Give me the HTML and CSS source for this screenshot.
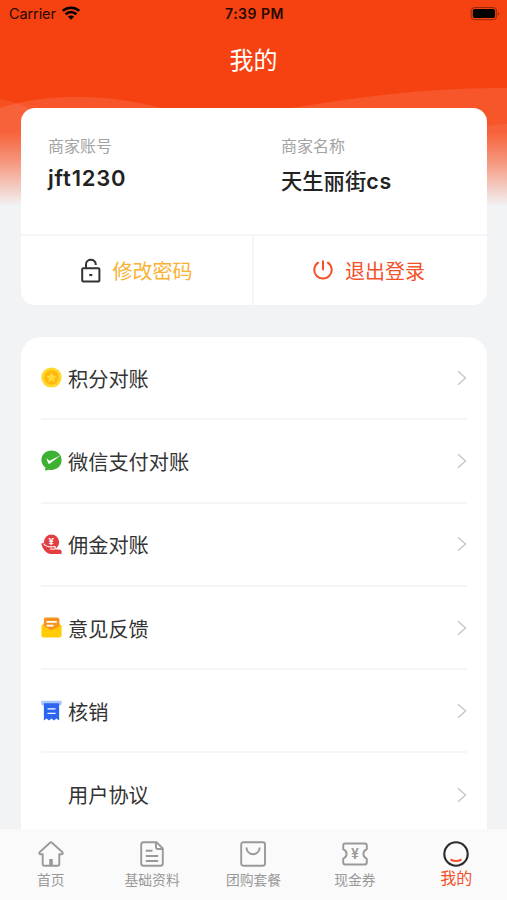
FILE: index.html
```html
<!DOCTYPE html>
<html lang="zh-CN">
<head>
  <meta charset="UTF-8">
  <meta name="viewport" content="width=device-width, initial-scale=1.0">
  <title>我的</title>
  <link rel="stylesheet" href="styles.css">
</head>
<body>
  <!-- Header background -->
  <svg class="hero-bg" viewBox="0 0 507 215" preserveAspectRatio="none">
    <defs>
      <linearGradient id="fade" x1="0" y1="0" x2="0" y2="1">
        <stop offset="0" stop-color="#f2f3f5" stop-opacity="0"/>
        <stop offset="0.4" stop-color="#f2f3f5" stop-opacity="0.36"/>
        <stop offset="1" stop-color="#f2f3f5"/>
      </linearGradient>
    </defs>
    <rect width="507" height="215" fill="#f64110"/>
    <path d="M0 108C50 92 110 94 165 109L165 215H0Z" fill="#fff" fill-opacity="0.11"/>
    <path d="M0 99C10 101 20 103 32 110V215H0Z" fill="#fff" fill-opacity="0.08"/>
    <path d="M290 108C360 97 430 87 507 88V215H290Z" fill="#fff" fill-opacity="0.11"/>
    <path d="M480 128C490 126 500 124 507 124V215H480Z" fill="#fff" fill-opacity="0.08"/>
    <rect y="132" width="507" height="74" fill="url(#fade)"/>
    <rect y="205" width="507" height="10" fill="#f2f3f5"/>
  </svg>

  <div class="page">
    <div class="status-bar">
      <div class="carrier">
        <span>Carrier</span>
        <svg width="18" height="14" viewBox="0 0 18 14">
          <g fill="none" stroke="#000" stroke-width="2.6">
            <path d="M.8 4.9C5.4.6 12.6.6 17.2 4.9"/>
            <path d="M3.6 8.3C6.8 5.4 11.2 5.4 14.4 8.3"/>
          </g>
          <path d="M5.9 10.6C7.7 9 10.3 9 12.1 10.6L9 13.8Z"/>
        </svg>
      </div>
      <div class="time">7:39 PM</div>
      <div class="battery">
        <svg width="30" height="14" viewBox="0 0 30 14">
          <rect x="1.2" y=".5" width="25.5" height="12.2" rx="3.5" fill="none" stroke="#000" stroke-opacity=".38"/>
          <rect x="2.8" y="2.1" width="22.3" height="9" rx="2"/>
          <path d="M28 4.5Q29.8 6.6 28 8.7Z" fill-opacity=".45"/>
        </svg>
      </div>
    </div>

    <h1 class="title">我的</h1>

    <div class="card profile">
      <div class="info">
        <div class="info-item">
          <div class="label">商家账号</div>
          <div class="value">jft1230</div>
        </div>
        <div class="info-item">
          <div class="label">商家名称</div>
          <div class="value value-cn">天生丽街<b>cs</b></div>
        </div>
      </div>
      <div class="actions">
        <a class="action change-pwd">
          <svg width="20" height="25" viewBox="0 0 20 25" fill="none" stroke="#333" stroke-width="2">
            <rect x="1.2" y="10.2" width="17.2" height="13.3" rx="1"/>
            <path d="M5 10.2V6.5C5 .3 14.8.3 14.8 6.5V7"/>
            <path d="M8.3 17H11.3" stroke-width="2.2"/>
          </svg>
          <span>修改密码</span>
        </a>
        <a class="action logout">
          <svg width="20" height="20" viewBox="0 0 20 20" fill="none" stroke="#f4512a" stroke-width="2" stroke-linecap="round">
            <path d="M5.1 2.7A8.7 8.7 0 1 0 14.9 2.7"/>
            <path d="M10 1.2V9.5"/>
          </svg>
          <span>退出登录</span>
        </a>
      </div>
    </div>

    <div class="card menu">
      <a class="menu-row">
        <svg class="menu-icon" viewBox="0 0 22 22">
          <circle cx="11" cy="11" r="10.6" fill="#ffd82c"/>
          <circle cx="11" cy="11" r="7.6" fill="#ffb810"/>
          <path d="M11 5.5L12.7 9L16.5 9.4L13.7 12L14.5 16L11 14L7.5 16L8.3 12L5.5 9.4L9.3 9Z" fill="#ffdc38"/>
        </svg>
        <span>积分对账</span>
        <svg class="arrow" viewBox="0 0 10 16"><path d="M1 1.2L8.5 8L1 14.8"/></svg>
      </a>
      <a class="menu-row">
        <svg class="menu-icon" viewBox="0 0 22 22">
          <path d="M11 .6C5 .6.4 4.9.4 10.5C.4 14 2.4 16.8 4.6 18.4L4.2 21.8L8.2 20.6C16 22 21.8 17 21.6 10.5C21.5 4.9 17 .6 11 .6Z" fill="#3eb135"/>
          <path d="M5.6 8.6L9 11.2L20.6 5.5L9.4 14.2Q8 15 7.4 13.6Z" fill="#fff"/>
        </svg>
        <span>微信支付对账</span>
        <svg class="arrow" viewBox="0 0 10 16"><path d="M1 1.2L8.5 8L1 14.8"/></svg>
      </a>
      <a class="menu-row">
        <svg class="menu-icon" viewBox="0 0 22 22">
          <circle cx="11" cy="8.6" r="8" fill="#e33e42"/>
          <path d="M.2 10L3 9.5C5.5 13.5 9 14 14 14.5V16L20.5 16.4Q22.4 18 21.2 21H9.5C5 19.8 1.8 16 .2 10Z" fill="#e33e42"/>
          <path d="M2.8 10.2C5.5 14 10 13.9 14.6 13.2Q16 15 13.5 16L9.5 15.7" fill="none" stroke="#fff" stroke-width="1.1"/>
          <text x="10.8" y="11.4" class="coin-sign">¥</text>
        </svg>
        <span>佣金对账</span>
        <svg class="arrow" viewBox="0 0 10 16"><path d="M1 1.2L8.5 8L1 14.8"/></svg>
      </a>
      <a class="menu-row">
        <svg class="menu-icon" viewBox="0 0 22 22">
          <path d="M.4 9.5L3 6.5H19L21.6 9.5V19Q21.6 21.5 19 21.5H3Q.4 21.5.4 19Z" fill="#ffcc05"/>
          <path d="M3 3Q3 .4 5.3.4H17Q19.3.4 19.3 3V9.7L11.8 13.7Q11 14 10.2 13.7L3 9.7Z" fill="#f7931e"/>
          <path d="M6.5 5.2H15.8M6.5 9H12.5" stroke="#fff" stroke-width="1.8" stroke-linecap="round"/>
        </svg>
        <span>意见反馈</span>
        <svg class="arrow" viewBox="0 0 10 16"><path d="M1 1.2L8.5 8L1 14.8"/></svg>
      </a>
      <a class="menu-row">
        <svg class="menu-icon" viewBox="0 0 22 22">
          <path d="M.3.8H21.7V4Q21.7 5.8 19.8 5.8H2.2Q.3 5.8.3 4Z" fill="#a9c5fb"/>
          <path d="M3 3.3H19V21.5L16.2 19.4L13.6 21.5L11 19.4L8.4 21.5L5.8 19.4L3 21.5Z" fill="#2b65f0"/>
          <path d="M6.8 9.3H15.2M6.8 14H15.2" stroke="#fff" stroke-width="1.5"/>
        </svg>
        <span>核销</span>
        <svg class="arrow" viewBox="0 0 10 16"><path d="M1 1.2L8.5 8L1 14.8"/></svg>
      </a>
      <a class="menu-row">
        <div class="menu-icon"></div>
        <span>用户协议</span>
        <svg class="arrow" viewBox="0 0 10 16"><path d="M1 1.2L8.5 8L1 14.8"/></svg>
      </a>
    </div>

    <div class="tab-bar">
      <a class="tab">
        <svg class="tab-icon" viewBox="0 0 26 26">
          <path d="M12 1.7Q13 .9 14 1.7L24.5 11.3Q25.2 13.2 23.3 13.2H21.3V23Q21.3 24.8 19.5 24.8H6.5Q4.7 24.8 4.7 23V13.2H2.7Q.8 13.2 1.5 11.3Z"/>
          <path d="M13 18V24.5" stroke-width="3.6"/>
        </svg>
        <span>首页</span>
      </a>
      <a class="tab">
        <svg class="tab-icon" viewBox="0 0 26 26">
          <path d="M4.5 1.2H17.5L23.8 7.5V22.5Q23.8 24.8 21.5 24.8H4.5Q2.2 24.8 2.2 22.5V3.5Q2.2 1.2 4.5 1.2Z"/>
          <path d="M17 1.5V6.5Q17 8 18.5 8H23.5M6.8 9.8H13.5M6.8 15H19.2M6.8 20H19.2"/>
        </svg>
        <span>基础资料</span>
      </a>
      <a class="tab">
        <svg class="tab-icon" viewBox="0 0 26 26">
          <rect x="1.2" y="1.2" width="23.8" height="23.6" rx="2.2"/>
          <path d="M6.3 6.5C7.5 15.5 18.6 15.5 19.8 6.5"/>
        </svg>
        <span>团购套餐</span>
      </a>
      <a class="tab">
        <svg class="tab-icon" viewBox="0 0 26 26">
          <path d="M3.2 2.5H22.8Q24.8 2.5 24.8 4.5V8.2C20.3 10.3 20.3 15.7 24.8 17.8V21.5Q24.8 23.5 22.8 23.5H3.2Q1.2 23.5 1.2 21.5V17.8C5.7 15.7 5.7 10.3 1.2 8.2V4.5Q1.2 2.5 3.2 2.5Z"/>
          <text x="13" y="18.2" class="ticket-sign">¥</text>
        </svg>
        <span>现金券</span>
      </a>
      <a class="tab active">
        <svg class="tab-icon" viewBox="0 0 26 26">
          <circle cx="13" cy="13" r="11.7" stroke="#2b2b2f" stroke-width="2.1"/>
          <path d="M7.5 18.3Q13 21.8 18.5 18.3" stroke="#f4512a" stroke-width="2.1"/>
        </svg>
        <span>我的</span>
      </a>
    </div>
  </div>
</body>
</html>
```

FILE: styles.css
```css
* {
  box-sizing: border-box;
}

body {
  margin: 0;
  height: 900px;
  overflow: hidden;
  position: relative;
  background: #f2f3f5;
  color: #333;
  font-family: Inter, 'Noto Sans CJK SC', sans-serif;
}

svg {
  display: block;
  flex-shrink: 0;
}

.hero-bg {
  position: absolute;
  top: 0;
  left: 0;
  width: 100%;
  height: 215px;
}

.page {
  position: relative;
  height: 900px;
  display: flex;
  flex-direction: column;
}

/* Status bar */
.status-bar {
  height: 28px;
  padding: 0 7px 0 9px;
  display: grid;
  grid-template-columns: 1fr auto 1fr;
  align-items: center;
  font-size: 14.5px;
  line-height: 28px;
  color: #260a02;
}

.carrier {
  display: flex;
  align-items: center;
  gap: 6px;
}

.carrier span {
  letter-spacing: -0.1px;
}

.carrier svg {
  margin-bottom: 2px;
}

.time {
  font-size: 14px;
  font-weight: 600;
  letter-spacing: 0.5px;
}

.battery {
  display: flex;
  justify-content: flex-end;
}

.title {
  margin: 0;
  height: 80px;
  padding-top: 15px;
  font-size: 24px;
  font-weight: 400;
  line-height: 36px;
  text-align: center;
  color: #fff;
}

/* Cards */
.card {
  margin: 0 20px 0 21px;
  background: #fff;
}

.profile {
  height: 197px;
  border-radius: 14px;
  flex-shrink: 0;
}

.info {
  height: 126px;
  padding-top: 26px;
  display: grid;
  grid-template-columns: 1fr 1fr;
}

.info-item {
  padding-left: 27px;
}

.label {
  font-size: 16px;
  line-height: 24px;
  color: #a3a3a3;
}

.value {
  margin-top: 6px;
  font-size: 22px;
  font-weight: 600;
  line-height: 28px;
  letter-spacing: 0.8px;
  color: #222;
}

.value-cn {
  margin-top: 9px;
  font-size: 21.3px;
  font-weight: 500;
  letter-spacing: 0;
}

.value-cn b {
  font-weight: 600;
  letter-spacing: 0.8px;
}

.actions {
  height: 71px;
  display: grid;
  grid-template-columns: 1fr 1fr;
  border-top: 2px solid #f5f6f7;
}

.action {
  display: flex;
  align-items: center;
  justify-content: center;
  gap: 12px;
  font-size: 20px;
  line-height: 30px;
}

.action span {
  padding-top: 3px;
}

.action svg {
  margin-bottom: 1px;
}

.change-pwd {
  color: #f9b233;
  border-right: 2px solid #f5f6f7;
}

.logout {
  color: #f4512a;
  padding-right: 3px;
}

/* Menu */
.menu {
  margin-top: 32px;
  padding: 0 20px;
  height: 492px;
  flex-shrink: 0;
  border-radius: 20px 20px 0 0;
  overflow: hidden;
}

.menu-row {
  height: 83.3px;
  display: flex;
  align-items: center;
  font-size: 20.2px;
  line-height: 30px;
  border-bottom: 2px solid #f5f5f6;
}

.menu-row span {
  padding-top: 4px;
}

.menu-row:last-child {
  border-bottom: none;
}

.menu-row:last-child span {
  padding-top: 2px;
}

.menu-icon {
  width: 21px;
  height: 21px;
  margin-right: 6px;
}

.arrow {
  width: 10px;
  height: 16px;
  margin-left: auto;
  fill: none;
  stroke: #c8c8c8;
  stroke-width: 1.5;
}

.coin-sign {
  font-size: 10px;
  font-weight: 700;
  fill: #fff;
  text-anchor: middle;
}

/* Tab bar */
.tab-bar {
  height: 71px;
  flex-shrink: 0;
  padding-top: 12px;
  display: grid;
  grid-template-columns: repeat(5, 1fr);
  background: #fafafa;
}

.tab {
  display: flex;
  flex-direction: column;
  align-items: center;
  font-size: 13.8px;
  line-height: 20px;
  color: #999;
}

.tab span {
  margin-top: 3px;
}

.tab-icon {
  width: 26px;
  height: 26px;
  fill: none;
  stroke: #999;
  stroke-width: 1.9;
}

.ticket-sign {
  font-size: 14px;
  font-weight: 600;
  fill: #999;
  stroke: none;
  text-anchor: middle;
}

.tab.active {
  font-size: 16px;
  color: #f4512a;
}

.tab.active span {
  margin-top: 1px;
}
```
